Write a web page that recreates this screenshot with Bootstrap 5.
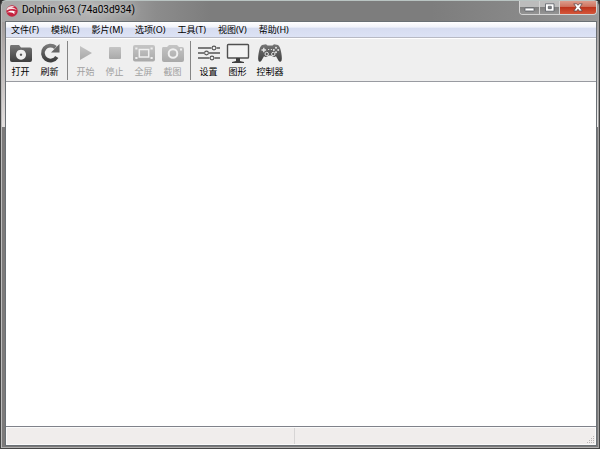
<!DOCTYPE html>
<html lang="zh-CN">
<head>
<meta charset="utf-8">
<meta name="viewport" content="width=device-width, initial-scale=1">
<title>Dolphin 963 (74a03d934)</title>
<link rel="stylesheet" href="https://cdn.jsdelivr.net/npm/bootstrap@5.3.0/dist/css/bootstrap.min.css">
<style>
  body { font-family: "Noto Sans", "Noto Sans CJK SC", sans-serif; font-size: 9px; line-height: 14px; color: #000; background: #303030; }
  button { font: inherit; color: inherit; border: 0; background: none; padding: 0; }
  svg { display: block; }
  .app-window {
    padding: 0 2px 2px 4px;
    border: 1px solid #454545; border-top-color: #b9c4c2; border-radius: 6px 6px 0 0;
    box-shadow: inset 1px 0 #bcbcbc, inset -1px 0 #a0a0a0, inset 0 -1px #b0b0b0;
    background:
      linear-gradient(#a29c9b, #e4e0df) 0 21px / 4px 105px no-repeat,
      linear-gradient(#a29c9b, #f0eeed) 100% 21px / 2px 105px no-repeat,
      linear-gradient(90deg, #a8a8a8 0, #b0b0b0 90px, #8c8c8c 155px, #7d7d7d 210px, #7d7d7d 430px, #8b8b8b 540px, #999 100%) 0 0 / 100% 21px no-repeat,
      #7c7a7a;
  }
  .title-bar { height: 20px; padding-left: 1px; }
  .title-text { font-family: Roboto, sans-serif; font-size: 10px; line-height: 18px; text-shadow: 0 0 6px #e4e4e4; }
  .caption-group { height: 14px; border: 1px solid #d4d4d4; border-top: 0; border-radius: 0 0 4px 4px; overflow: hidden; }
  .caption-btn { width: 20px; display: grid; place-items: center; background: linear-gradient(#bcbcbc 45%, #808080 50%, #959595); border-right: 1px solid #d2d2d2; }
  .caption-close { width: 36px; border: 0; background: linear-gradient(#dc9c8c 0, #cf7460 42%, #bd341d 50%, #d5573a 100%); }
  .client { border: 1px solid #6a7075; background: #efefef; }
  .menu-bar { height: 16px; padding: 0 5px; gap: 12px; background: linear-gradient(#fff 0, #f0f2fa 35%, #d6dcf0 40%, #dde3f5 100%); border-bottom: 1px solid #b8bac4; }
  .tool-bar { height: 44px; border-top: 1px solid #fff; border-bottom: 1px solid #999ba1; background: #efefef; }
  .tool { width: 29px; padding-top: 3px; display: flex; flex-direction: column; align-items: center; gap: 1px; }
  .tool svg { width: 24px; height: 22px; overflow: visible; }
  .tool-wide { width: 36px; }
  .tool:disabled { color: #a0a0a0; }
  .tool-sep { width: 1px; height: 39px; margin: 2px 3px 0; background: #858585; }
  .game-area { background: #fff; border-bottom: 1px solid #80828a; }
  .status-bar { height: 18px; background: #f0edec; border: 1px solid #fafafa; }
  .status-cell { width: 49%; border-right: 1px solid #d7d5d5; }
</style>
<script src="https://cdn.jsdelivr.net/npm/bootstrap@5.3.0/dist/js/bootstrap.bundle.min.js"></script>
</head>
<body>
<svg width="0" height="0" class="position-absolute" aria-hidden="true">
  <defs>
    <linearGradient id="dark" x2="0" y2="1"><stop stop-color="#777"/><stop offset="1" stop-color="#3f3f3f"/></linearGradient>
    <linearGradient id="pale" x2="0" y2="1"><stop stop-color="#c5c5c5"/><stop offset="1" stop-color="#a9a9a9"/></linearGradient>
  </defs>
</svg>
<div class="app-window vh-100 d-flex flex-column">
  <header class="title-bar d-flex flex-shrink-0">
    <svg class="mt-1" width="12" height="12" viewBox="0 0 12 12" aria-hidden="true">
      <circle cx="6" cy="6" r="5.7" fill="#c4233f"/>
      <path d="M.7 4.2C2 1.2 6 .2 9 1.5L5.4 2.2C7.7 2.5 9.7 3.4 10.7 5 7.8 3.7 4.1 3.7.7 5.4z" fill="#f7dce1"/>
      <path d="M1 7.5C3.5 5.1 7.500 5 10.400 7.300L8.200 7c.5.7.5 1.500 0 2.200C7.500 7.500 4.500 6.800 1 7.500z" fill="#fff"/>
    </svg>
    <div class="title-text ms-1 flex-grow-1">Dolphin 963 (74a03d934)</div>
    <div class="caption-group d-flex">
      <button class="caption-btn" aria-label="最小化"><svg width="11" height="9"><rect x="1" y="5" width="9" height="3" rx=".6" fill="#fff" stroke="#555a62" stroke-width=".8"/></svg></button>
      <button class="caption-btn" aria-label="最大化"><svg width="11" height="9"><path fill-rule="evenodd" d="M1.500.8h8.500v7.400H1.500zM4.300 3.300v2.400h3V3.300z" fill="#fff" stroke="#555a62" stroke-width=".8"/></svg></button>
      <button class="caption-btn caption-close" aria-label="关闭"><svg width="10" height="9"><path d="M.8.8h3L5 2.300 6.200.8h3L6.800 4.300 9.200 8h-3L5 6.200 3.800 8h-3l2.400-3.700z" fill="#fff" stroke="#5e464a" stroke-width=".8"/></svg></button>
    </div>
  </header>
  <main class="client d-flex flex-column flex-grow-1">
    <nav class="menu-bar d-flex flex-shrink-0" aria-label="主菜单">
      <button>文件(F)</button><button>模拟(E)</button><button>影片(M)</button><button>选项(O)</button><button>工具(T)</button><button>视图(V)</button><button>帮助(H)</button>
    </nav>
    <div class="tool-bar d-flex flex-shrink-0" role="toolbar">
      <button class="tool"><svg viewBox="0 0 24 22"><path fill="url(#dark)" fill-rule="evenodd" d="M2 3h8l2 2.500h9q2 0 2 2V18q0 2-2 2H3q-2 0-2-2V5q0-2 1-2zM12 7.700a5 5 0 1 0 .01 0zM12 11.500a1.200 1.200 0 1 1-.01 0z"/></svg>打开</button>
      <button class="tool"><svg viewBox="0 0 24 22"><path d="M17.500 5.500A7.500 7.500 0 1 0 18.800 15" fill="none" stroke="url(#dark)" stroke-width="3.800"/><path d="M21.500 2v8.500H13z" fill="#666"/></svg>刷新</button>
      <div class="tool-sep"></div>
      <button class="tool" disabled><svg viewBox="0 0 24 22"><path d="M6 4l12 7-12 7z" fill="url(#pale)"/></svg>开始</button>
      <button class="tool" disabled><svg viewBox="0 0 24 22"><rect x="6" y="5" width="12" height="12" rx="1" fill="url(#pale)"/></svg>停止</button>
      <button class="tool" disabled><svg viewBox="0 0 24 22"><rect x="1" y="3" width="22" height="16.500" rx="2" fill="url(#pale)"/><path fill="none" stroke="#f0f0f0" stroke-width="1.500" d="M7.300 7.500h9.400v7.500H7.300z"/><path d="M3.300 5.500h2.200v2H3.300zM18.500 5.500h2.200v2h-2.200zM3.300 15h2.200v2H3.300zM18.500 15h2.200v2h-2.200z" fill="#eee"/></svg>全屏</button>
      <button class="tool" disabled><svg viewBox="0 0 24 22"><path fill="url(#pale)" fill-rule="evenodd" d="M2 5h4l2-2h8l2 2h3q2 0 2 2v11q0 2-2 2H3q-2 0-2-2V7q0-2 1-2z"/><circle cx="12" cy="11.500" r="4.300" fill="none" stroke="#f0f0f0" stroke-width="2"/><path d="M19 6.500h2v2h-2z" fill="#eee"/></svg>截图</button>
      <div class="tool-sep"></div>
      <button class="tool"><svg viewBox="0 0 24 22"><g fill="none" stroke="#555" stroke-width="1.400"><path d="M1 6h13.500M19.500 6H23M1 11h6M12 11h11M1 16h11.500M17.500 16H23"/><circle cx="17" cy="6" r="1.900" stroke-width="1.100"/><circle cx="9.500" cy="11" r="1.900" stroke-width="1.100"/><circle cx="15" cy="16" r="1.900" stroke-width="1.100"/></g></svg>设置</button>
      <button class="tool"><svg viewBox="0 0 24 22"><rect x="1.500" y="2.500" width="21" height="13.500" rx=".8" fill="#f3f3f3" stroke="#505050" stroke-width="1.400"/><path d="M10 16h4v3l4 1v1H6v-1l4-1z" fill="#3f3f3f"/></svg>图形</button>
      <button class="tool tool-wide"><svg viewBox="0 0 24 22"><path fill="url(#dark)" d="M4 3l4-.8 1.500 1.300h5L16 2.200l4 .8c1.500 1 2.200 3 2.800 5.500.8 3.500 1.400 8 .8 10-.5 1.500-2.100 1.600-3 .3L18 14.300q-2.500 1.500-4.500-.7h-3q-2 2.200-4.500.7l-2.600 4.500c-.9 1.300-2.500 1.200-3-.3-.6-2 0-6.500.8-10C1.800 6 2.500 4 4 3z"/><path d="M3.500 8h4.600M5.800 5.700v4.600" stroke="#e5e5e5" stroke-width="1.400"/><path d="M10 7.500h1.200m1.600 0H14" stroke="#ddd"/><circle cx="8.700" cy="12" r="1.700" fill="#555" stroke="#e5e5e5"/><circle cx="15.300" cy="12" r="1.700" fill="#555" stroke="#e5e5e5"/><g fill="#e5e5e5"><circle cx="18" cy="5.800" r="1"/><circle cx="18" cy="10.200" r="1"/><circle cx="15.800" cy="8" r="1"/><circle cx="20.200" cy="8" r="1"/></g></svg>控制器</button>
    </div>
    <section class="game-area flex-grow-1" aria-label="游戏列表"></section>
    <footer class="status-bar d-flex flex-shrink-0">
      <div class="status-cell"></div>
      <div class="flex-grow-1 d-flex justify-content-end align-items-end"><svg width="8" height="8" aria-hidden="true"><path d="M6 0h1v1H6zM4 2h1v1H4zM6 2h1v1H6zM2 4h1v1H2zM4 4h1v1H4zM6 4h1v1H6zM0 6h1v1H0zM2 6h1v1H2zM4 6h1v1H4zM6 6h1v1H6z" fill="#b8b5b5"/></svg></div>
    </footer>
  </main>
</div>
</body>
</html>
